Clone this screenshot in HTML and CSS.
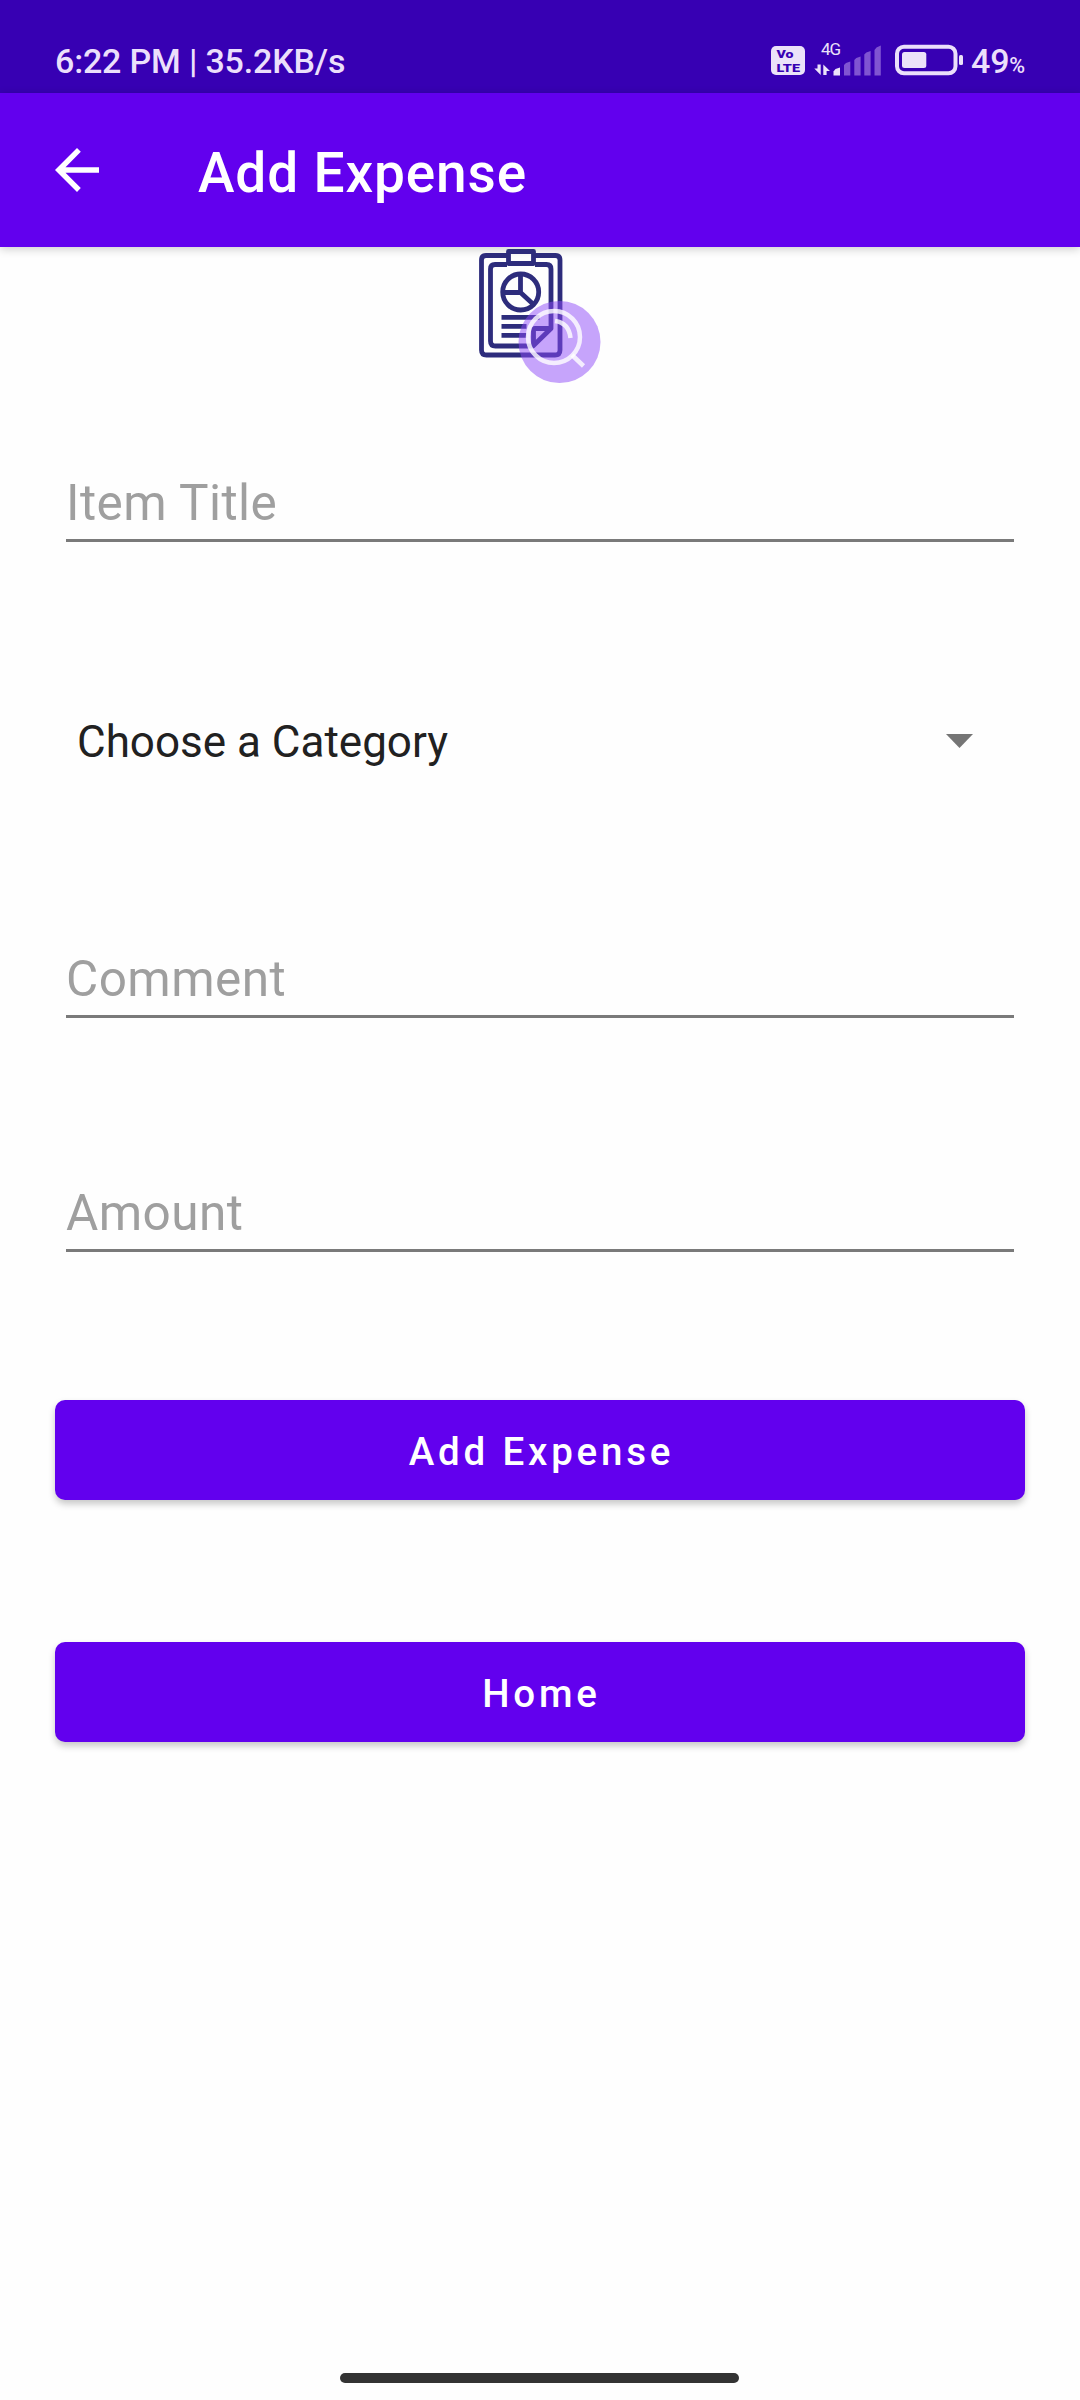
FILE: index.html
```html
<!DOCTYPE html>
<html lang="en">
<head>
<meta charset="utf-8">
<title>Add Expense</title>
<link rel="stylesheet" href="styles.css">
</head>
<body>
<div class="screen">
  <div class="status">
    <span class="clock">6:22 PM | 35.2KB/s</span>
    <div class="indicators">
      <svg class="signals" width="194" height="93" viewBox="770 0 194 93">
        <rect x="771" y="46" width="34" height="29" rx="5" fill="#ebe2f9"/>
        <g class="volte">
          <text x="776.5" y="58" textLength="17" lengthAdjust="spacingAndGlyphs">Vo</text>
          <text x="776.5" y="71.6" textLength="23.5" lengthAdjust="spacingAndGlyphs">LTE</text>
        </g>
        <text class="net" x="821" y="55" textLength="20">4G</text>
        <g fill="#ebe2f9">
          <path d="M817.5 64.5h3.2V75l-6.4-6.5h3.2zM823.3 75V64.500l6.700 6.500h-3.400v4z"/>
          <path d="M833.500 75.500v-4l2-2.500 4.500-1.500v8z"/>
        </g>
        <g fill="#8054d2">
          <path d="M844 75.500v-10.500l2-2 4.300-1.500v14z"/>
          <path d="M854.300 75.500v-15.500l2-2 4.300-1.500v19z"/>
          <path d="M864.300 75.500v-21l2-2 4.300-1.500v24.500z"/>
          <path d="M874.500 75.500v-25.500l2-2.500 4.300-2v30z"/>
        </g>
        <rect x="897" y="46.700" width="58.500" height="26.600" rx="7" fill="none" stroke="#ebdffb" stroke-width="4"/>
        <rect x="902" y="52" width="24.300" height="16" rx="2.500" fill="#ebe2f9"/>
        <rect x="959" y="55" width="4" height="10" rx="1.500" fill="#ebe2f9"/>
      </svg>
      <span class="battery">49<small class="percent">%</small></span>
    </div>
  </div>

  <header class="appbar">
    <svg class="back" width="44" height="44" viewBox="0 0 44 44"><path d="M44 19.300v5.500H10.500L25.800 40.100 22 44 0 22 22 0l3.800 3.800L10.500 19.300z" fill="#fff"/></svg>
    <h1 class="title">Add Expense</h1>
  </header>

  <main class="form">
    <svg class="logo" width="160" height="138" viewBox="0 12 160 138">
      <g fill="none" stroke="#2d2c7c" stroke-width="4.800" stroke-linejoin="round">
        <path d="M48 20.500H26q-4.500 0-4.500 4.500V115q0 5 5 5H95q5 0 5-5V25q0-4.500-4.500-4.500H74"/>
        <path d="M47 29.500H35q-4.500 0-4.500 4.500V106q0 5 5 5H73L91 93.500V34q0-4.500-4.500-4.500H75"/>
        <path d="M48.500 28.500V16.500H73.500V28.500z"/>
        <path d="M73.500 110V95q0-1.500 1.500-1.500H91"/>
        <circle cx="60.700" cy="57" r="18"/>
        <path d="M60.500 39V57.500H43M60.500 57.500L73 69M41.500 82.300H79.500M41.500 91.300H66.500M41.500 100.300H66.500"/>
      </g>
      <circle cx="99.500" cy="107" r="41" fill="#8d49f7" fill-opacity=".5"/>
      <g fill="none" stroke="#fff" stroke-opacity=".8" stroke-width="4.500">
        <circle cx="94" cy="102" r="26"/>
        <path d="M95 86Q109 88 110.500 103M112 120L123.500 131"/>
      </g>
    </svg>

    <div class="field field-title">Item Title</div>
    <div class="select">
      <span class="choice">Choose a Category</span>
      <svg width="27" height="14" viewBox="0 0 27 14"><path d="M0 0H27L13.500 14z" fill="#757575"/></svg>
    </div>
    <div class="field field-comment">Comment</div>
    <div class="field field-amount">Amount</div>
    <button class="btn btn-add">Add Expense</button>
    <button class="btn btn-home">Home</button>
  </main>
  <div class="homebar"></div>
</div>
</body>
</html>
```
FILE: styles.css
```css
* { box-sizing: border-box; }
body { margin: 0; background: #fefefe; font-family: Roboto, "Liberation Sans", sans-serif; }
.screen { width: 1080px; height: 2400px; display: flex; flex-direction: column; background: #fefefe; }

.status {
  height: 93px;
  padding: 0 55px;
  display: flex;
  justify-content: space-between;
  background: #3700b3;
  color: #ebdffb;
  font-size: 34px;
  font-weight: 500;
}
.clock { line-height: 40px; padding-top: 41px; letter-spacing: -.17px; }
.indicators { display: flex; gap: 7px; }
.signals { display: block; }
.volte { fill: #3700b3; font-weight: 900; font-size: 11.5px; }
.net { fill: #ebe2f9; font-size: 17px; font-weight: 400; }
.battery { line-height: 40px; padding-top: 41px; white-space: nowrap; letter-spacing: -.2px; }
.percent { font-size: 21.5px; }

.appbar {
  height: 154px;
  padding: 6px 55px 0;
  display: flex;
  align-items: center;
  gap: 99px;
  background: #6200ee;
  box-shadow: 0 2px 9px rgba(0, 0, 0, .2);
}
.back { margin-bottom: 6px; }
.title { margin: 0; color: #fff; font-size: 55px; line-height: 64px; font-weight: 500; letter-spacing: .85px; }

.form { flex: 1; display: flex; flex-direction: column; padding: 0 55px; }
.logo { align-self: center; }
.field {
  height: 80px;
  margin: 0 11px;
  border-bottom: 3px solid #7a7a7a;
  color: #9f9f9f;
  font-size: 49.5px;
  line-height: 82px;
  letter-spacing: .46px;
}
.field-title { margin-top: 77px; }
.select {
  height: 60px;
  margin-top: 169px;
  padding: 0 52px 0 22px;
  display: flex;
  align-items: center;
  justify-content: space-between;
  color: #212121;
  font-size: 44px;
}
.choice { padding-top: 2px; }
.field-comment { margin-top: 167px; }
.field-amount { margin-top: 154px; }
.btn {
  height: 100px;
  padding: 2px 0 0 3px;
  border: 0;
  border-radius: 10px;
  background: #6200ee;
  box-shadow: 0 4px 7px rgba(0, 0, 0, .22);
  color: #fff;
  font: 500 38.5px Roboto, "Liberation Sans", sans-serif;
  letter-spacing: 3.8px;
}
.btn-add { margin-top: 148px; }
.btn-home { margin-top: 142px; }
.homebar { align-self: flex-start; width: 399px; height: 10px; margin: 0 0 17px 340px; border-radius: 5px; background: #333; }
```
